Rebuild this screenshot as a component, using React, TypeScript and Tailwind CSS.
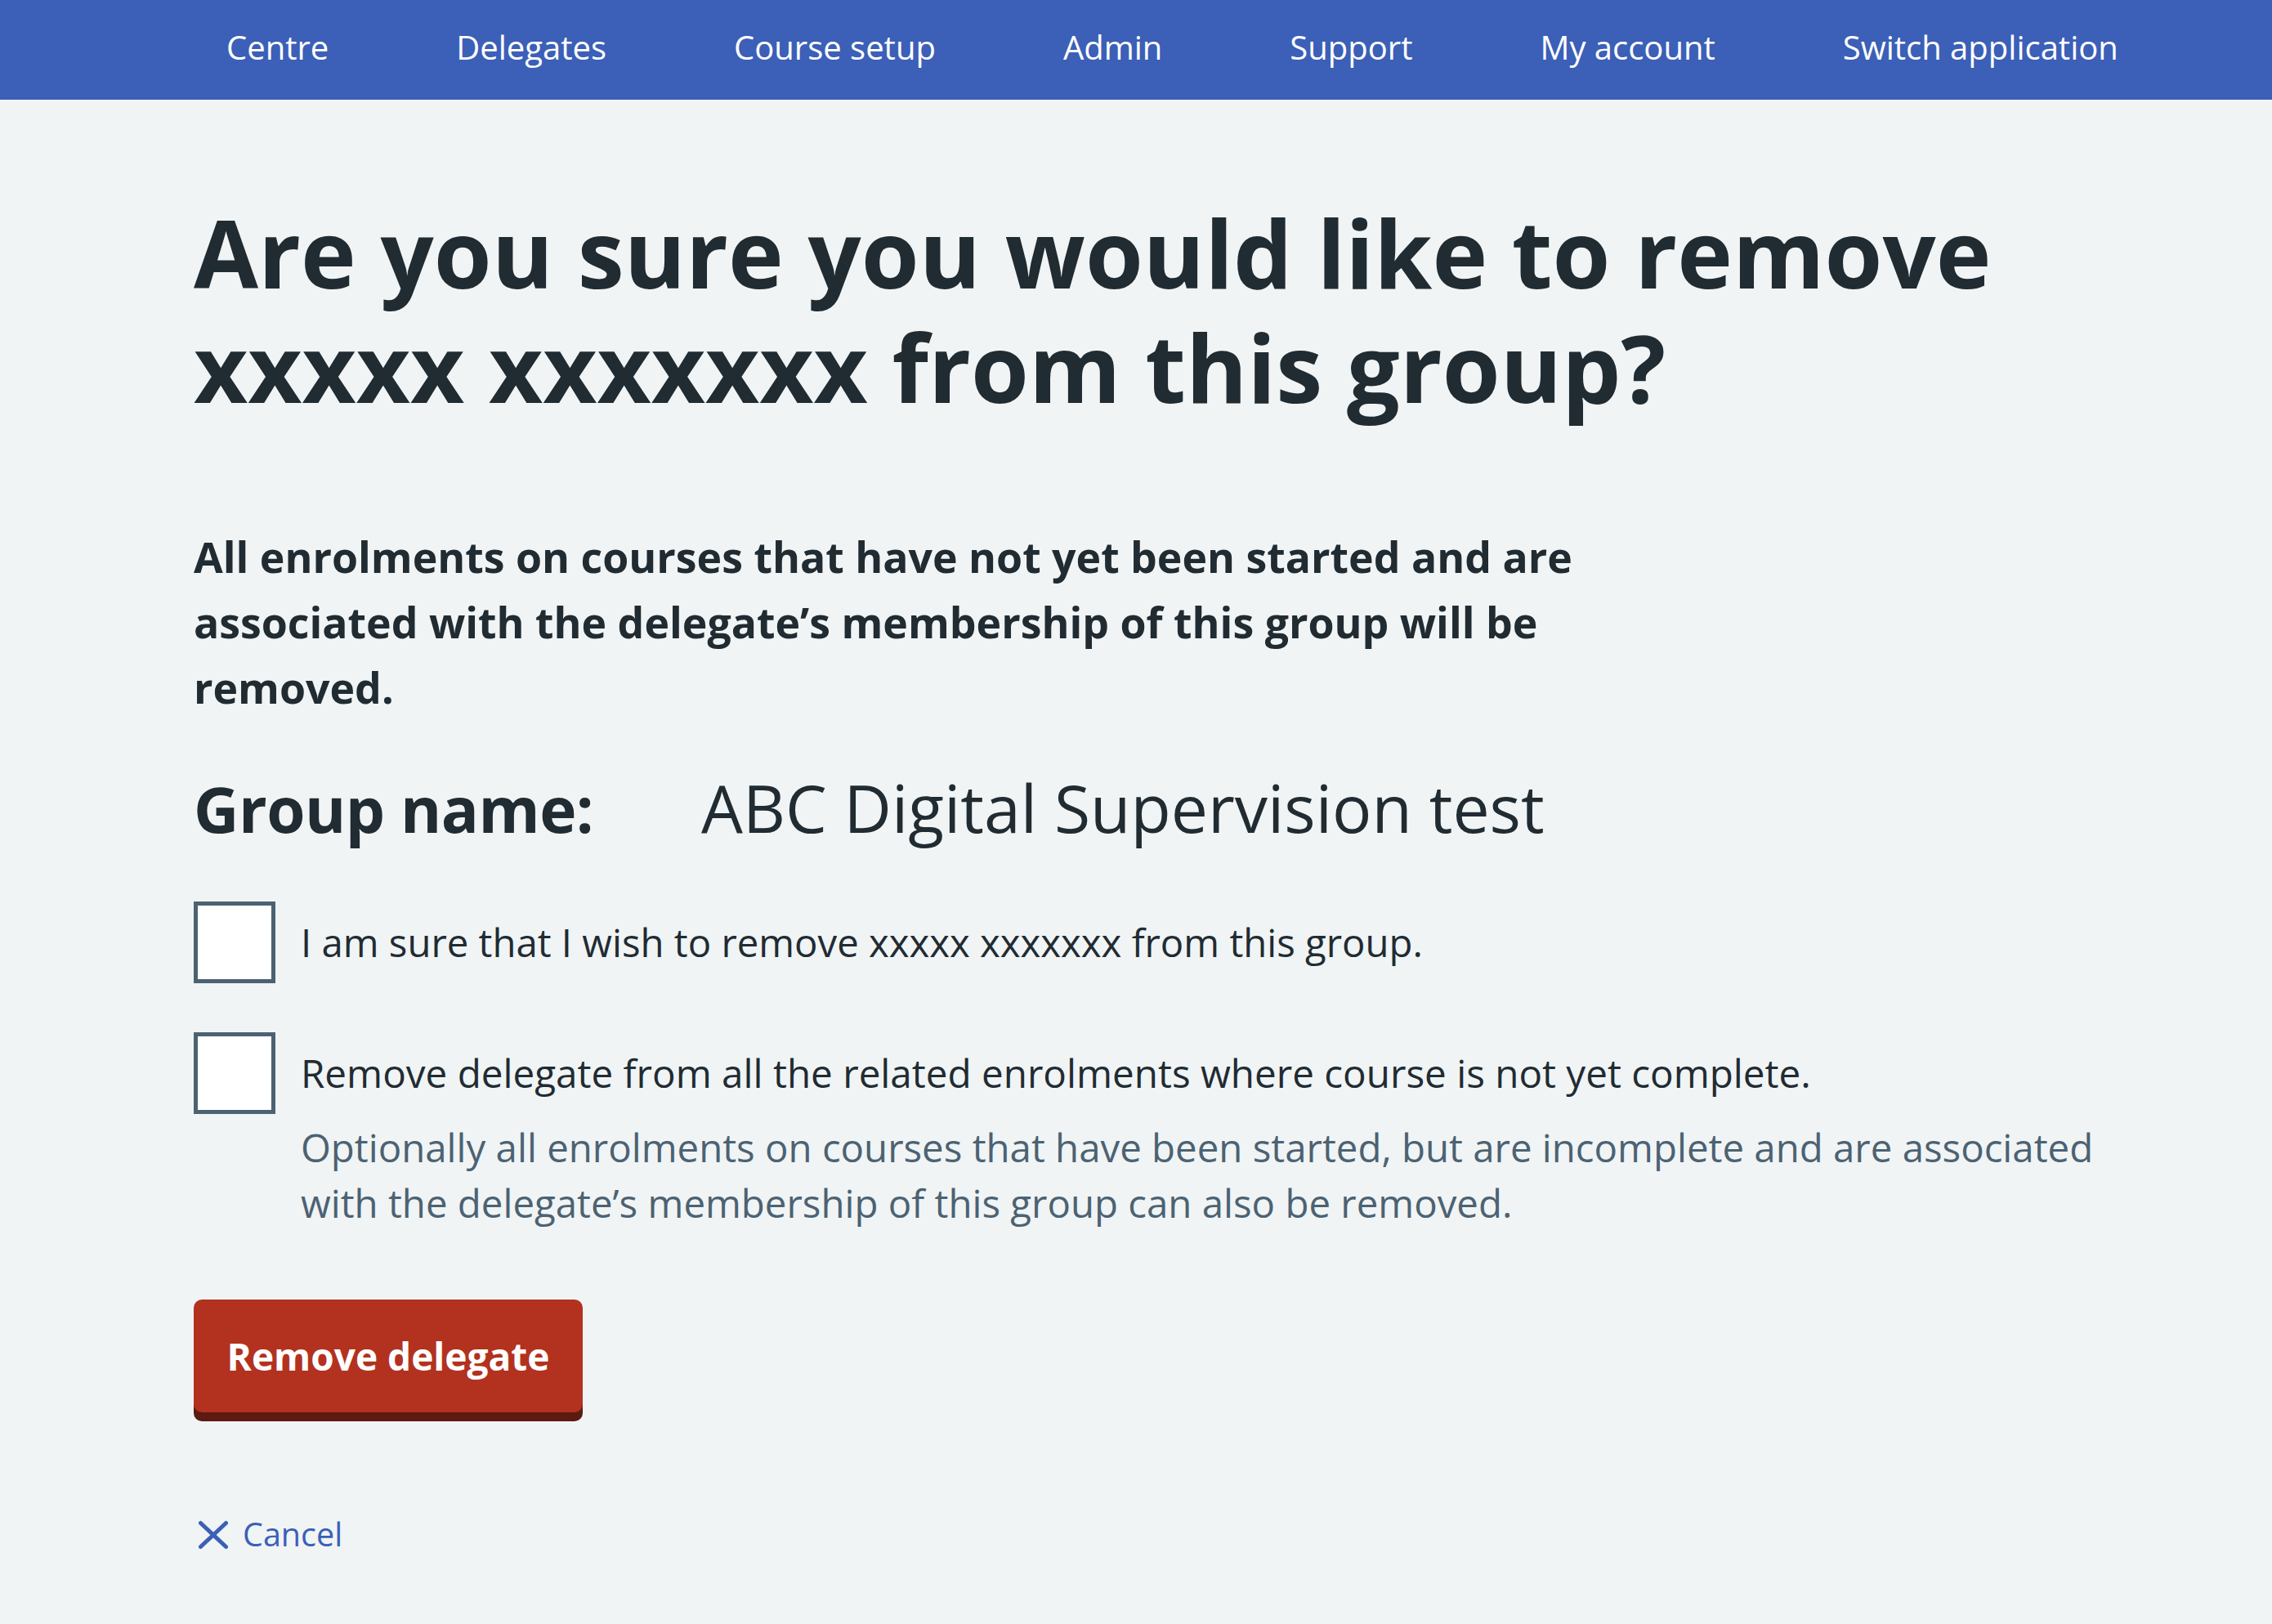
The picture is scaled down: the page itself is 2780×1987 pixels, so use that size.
import React from "react";

const font = { fontFamily: '"Open Sans", "Noto Sans", sans-serif' };

export default function App() {
  const nav = ["Centre", "Delegates", "Course setup", "Admin", "Support", "My account", "Switch application"];
  return (
    <div className="min-h-screen bg-[#f0f4f5] text-[#212b32]" style={font}>
      <nav className="h-[122px] bg-[#3c5fb7] flex items-center pl-[277px] pb-[7px] gap-[156px]">
        {nav.map((n) => (
          <a key={n} className="text-white text-[40px] leading-none whitespace-nowrap">{n}</a>
        ))}
      </nav>
      <main className="pl-[237px] pt-[117px]">
        <h1 className="text-[114.6px] leading-[140px] font-bold whitespace-nowrap">
          Are you sure you would like to remove
          <br />
          xxxxx xxxxxxx from this group?
        </h1>
        <p className="mt-[122px] text-[51.8px] leading-[80px] font-bold whitespace-nowrap">
          All enrolments on courses that have not yet been started and are
          <br />
          associated with the delegate’s membership of this group will be
          <br />
          removed.
        </p>
        <div className="mt-[59px] flex items-baseline leading-[96px]">
          <div className="w-[621px] font-bold text-[76.5px] tracking-[-0.5px]">Group name:</div>
          <div className="text-[80.5px]">ABC Digital Supervision test</div>
        </div>
        <div className="mt-[66px] flex gap-[31px]">
          <div className="w-[100px] h-[100px] shrink-0 bg-white border-[5px] border-[#4c6272]" />
          <div className="min-h-[100px] flex items-center text-[47.3px] leading-[68px] whitespace-nowrap">
            I am sure that I wish to remove xxxxx xxxxxxx from this group.
          </div>
        </div>
        <div className="mt-[60px] flex gap-[31px]">
          <div className="w-[100px] h-[100px] shrink-0 bg-white border-[5px] border-[#4c6272]" />
          <div className="flex flex-col">
            <div className="min-h-[100px] flex items-center text-[47.6px] leading-[68px] whitespace-nowrap">
              Remove delegate from all the related enrolments where course is not yet complete.
            </div>
            <div className="mt-[7px] text-[47.4px] leading-[68px] text-[#4c6272] whitespace-nowrap">
              Optionally all enrolments on courses that have been started, but are incomplete and are associated
              <br />
              with the delegate’s membership of this group can also be removed.
            </div>
          </div>
        </div>
        <button className="mt-[84px] w-[476px] h-[138px] rounded-[10px] bg-[#b2321f] text-white font-bold text-[46px] shadow-[0_11px_0_#5c1a12] flex items-center justify-center">
          Remove delegate
        </button>
        <a className="mt-[120px] flex items-center gap-[16px] text-[#3c5fb7] text-[39.5px] w-max">
          <svg className="ml-[4px]" width="40" height="38" viewBox="0 0 40 38" fill="none">
            <path d="M4.5 4.5 L35.5 33.5 M35.5 4.5 L4.5 33.5" stroke="#3c5fb7" strokeWidth="5" strokeLinecap="round" />
          </svg>
          <span>Cancel</span>
        </a>
      </main>
    </div>
  );
}
